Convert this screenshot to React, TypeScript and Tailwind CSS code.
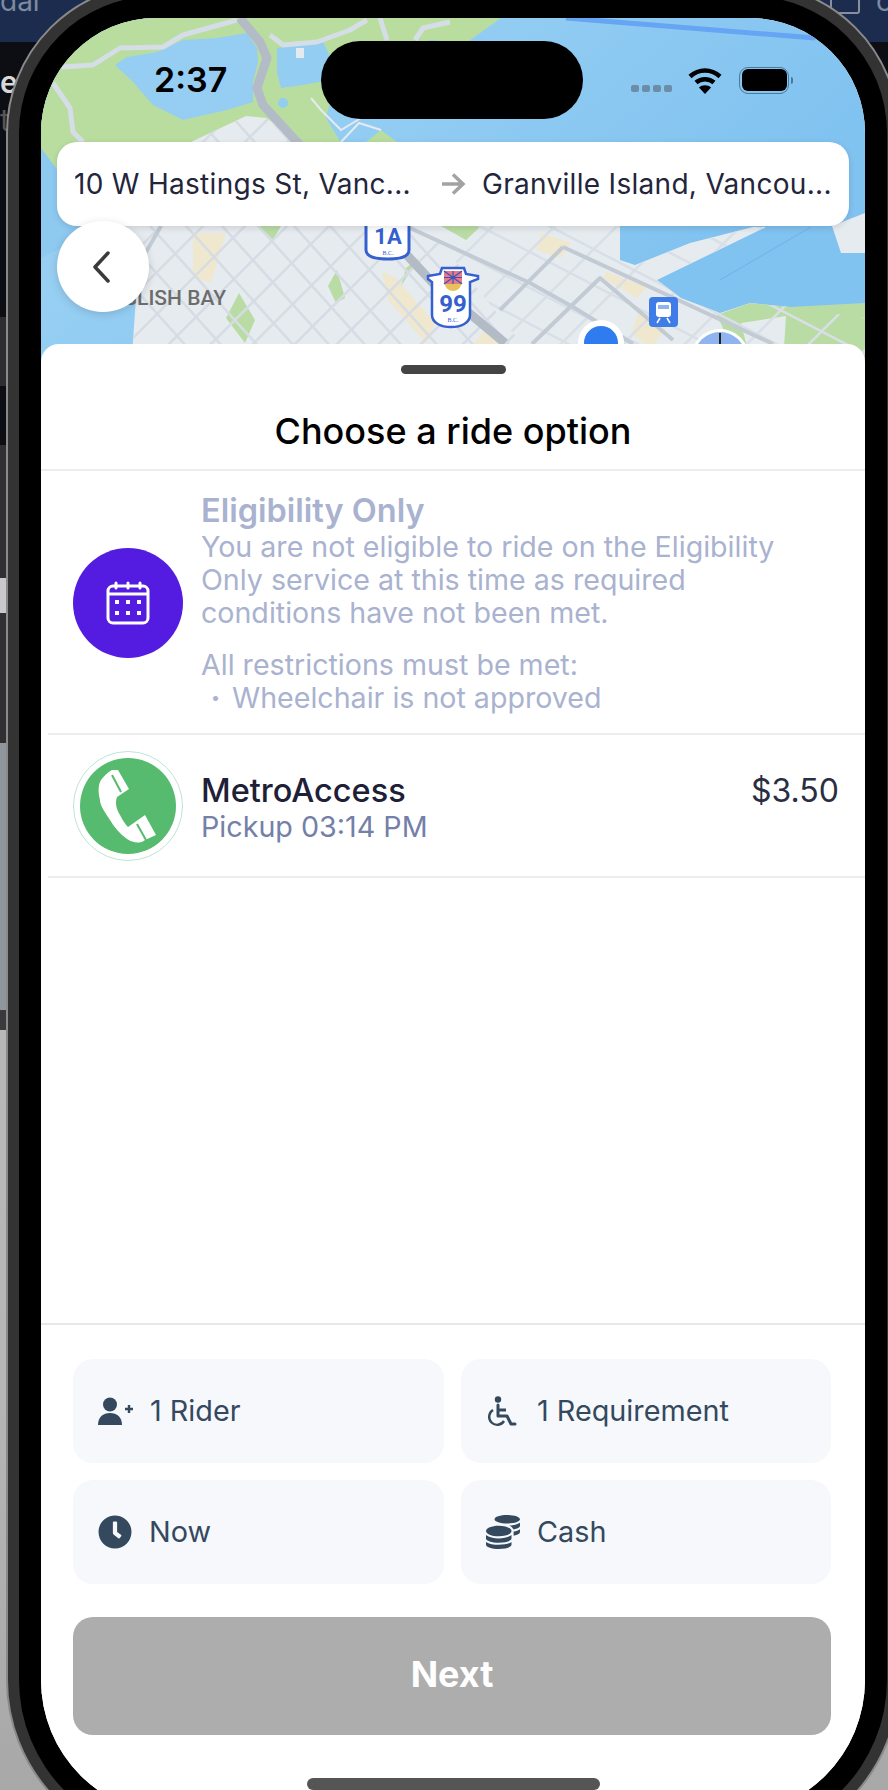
import { FaClock, FaCoins } from "react-icons/fa";

const seq = (from: number, to: number, step: number) => {
  const out: number[] = [];
  for (let v = from; v <= to; v += step) out.push(v);
  return out;
};

const cityShape =
  "60,124 150,124 205,98 225,100 262,124 560,124 579,209 579,242 594,247 649,225 712,209 725,209 616,262 640,280 679,295 709,285 749,289 824,300 824,350 90,350 95,280 85,230";

const MapDrawing = () => (
  <svg viewBox="0 0 824 350" className="absolute inset-0 h-[350px] w-[824px]">
    <defs>
      <linearGradient id="water" x1="0.4" y1="0" x2="1" y2="0.3">
        <stop offset="0" stopColor="#97cff3" />
        <stop offset="1" stopColor="#80c2f0" />
      </linearGradient>
      <clipPath id="city">
        <polygon points={cityShape} />
      </clipPath>
      <clipPath id="west">
        <polygon points="60,100 300,100 500,350 60,350" />
      </clipPath>
      <clipPath id="east">
        <polygon points="300,100 824,100 824,350 500,350" />
      </clipPath>
    </defs>

    <rect width="824" height="350" fill="url(#water)" />

    {/* park */}
    <polygon points="0,0 460,0 425,25 390,22 360,32 300,40 285,100 300,125 0,215" fill="#b8dd9f" />
    <polygon points="0,130 60,210 0,240" fill="#8ec9f0" />
    <polygon points="236,30 282,24 300,60 262,67 240,70 236,55" fill="#93cdf2" />
    <polygon points="74,47 86,39 116,34 142,22 176,20 206,15 216,30 217,44 212,64 212,84 186,92 142,102 112,87 92,64" fill="#96cef3" />
    <circle cx="242" cy="85" r="5" fill="#93cdf2" />
    <polygon points="325,124 340,112 356,124" fill="#b8dd9f" />
    <line x1="525" y1="0" x2="774" y2="20" stroke="#65a5f3" strokeWidth="5" />
    <line x1="679" y1="262" x2="770" y2="209" stroke="#74b0e4" strokeWidth="1" />

    {/* park roads */}
    <g fill="none" stroke="#d5dde6" strokeWidth="5" strokeLinejoin="round">
      <polyline points="21,49 52,47 79,30 122,29 142,17 196,2" />
      <polyline points="12,65 29,90 32,114 42,124" />
      <polyline points="229,17 242,27 276,24 309,12 326,2" />
      <polyline points="339,0 346,22" />
      <polyline points="374,22 382,10 409,4" />
    </g>
    <g fill="none" stroke="#e4ebf0" strokeWidth="2">
      <polyline points="270,80 280,92 300,112 320,100" />
      <polyline points="285,72 298,84 316,76" />
      <polyline points="300,124 318,105 340,112" />
    </g>
    <rect x="255" y="30" width="8" height="10" fill="#e4ebf0" />

    {/* city */}
    <polygon points={cityShape} fill="#e6ebef" />
    <polygon points="791,208 824,195 824,235 800,235" fill="#e6ebef" />
    <polygon points="676,297 709,285 749,289 824,285 824,350 700,350" fill="#b9dca4" />
    <polygon points="700,305 745,298 742,345 710,345" fill="#e6ebef" />
    <g clipPath="url(#city)">
      <g fill="#efe8cf">
        <polygon points="566,254 606,269 596,280 562,260" />
        <polygon points="341,254 354,259 394,305 386,326 347,282" />
        <polygon points="449,305 470,330 430,330" />
        <polygon points="152,215 185,215 170,265 152,260" />
        <polygon points="500,215 530,225 520,240 495,232" />
        <polygon points="600,290 625,310 610,330 590,315" />
      </g>
      <g fill="#b9dca4">
        <polygon points="287,268 296,252 304,280 295,285" />
        <polygon points="185,300 198,275 214,302 204,325" />
        <polygon points="218,208 240,208 232,222" />
        <polygon points="400,208 440,208 425,222" />
        <polygon points="365,250 378,240 360,268" />
      </g>
      <g clipPath="url(#west)" stroke="#d6dce4" strokeWidth="2.500">
        {seq(-60, 420, 36).map((x) => (
          <line key={`wa${x}`} x1={x} y1={100} x2={x + 225} y2={350} />
        ))}
        {seq(60, 760, 42).map((x) => (
          <line key={`wb${x}`} x1={x} y1={100} x2={x - 250} y2={350} />
        ))}
      </g>
      <g clipPath="url(#east)" stroke="#d8dfe6" strokeWidth="2.500">
        {seq(-80, 260, 36).map((y) => (
          <line key={`ea${y}`} x1={300} y1={y} x2={824} y2={y + 272} />
        ))}
        {seq(560, 1100, 62).map((x) => (
          <line key={`eb${x}`} x1={x} y1={100} x2={x - 250} y2={350} />
        ))}
      </g>
      <g fill="none" stroke="#c2cad4" strokeWidth="4" strokeLinejoin="round">
        <polyline points="369,210 489,265 532,289 592,326" />
        <polyline points="522,229 609,269 732,326" />
        <polyline points="459,292 522,229" />
        <polyline points="491,326 559,260 632,322" />
        <polyline points="120,208 90,260" />
      </g>
    </g>

    {/* highway */}
    <polyline points="199,0 219,24 226,40 216,70 222,87 256,124 364,235 392,265 464,325" fill="none" stroke="#b3bcc6" strokeWidth="9" strokeLinejoin="round" />

    <text x="185" y="287" textLength="130" lengthAdjust="spacingAndGlyphs" textAnchor="end" fontFamily="Roboto, sans-serif" fontSize="21" fontWeight="500" fill="#6c6c6c">ENGLISH BAY</text>

    {/* 1A shield */}
    <path d="M325 190h43v42c0 7-10 9-21 9s-22-2-22-9z" fill="#fff" stroke="#3560d0" strokeWidth="3" />
    <text x="347" y="226" textAnchor="middle" fontFamily="Roboto, sans-serif" fontWeight="700" fontSize="22" fill="#3560d0">1A</text>
    <text x="347" y="237" textAnchor="middle" fontFamily="Liberation Serif, serif" fontSize="6" fill="#3560d0">B.C.</text>

    {/* 99 shield */}
    <g transform="translate(5 2)">
      <path d="M382 256l12-2 2-6h22l2 6 12 2v3l-8 3v33c0 8-9 12-19 12s-19-4-19-12v-33l-4-3z" fill="#fff" stroke="#3560d0" strokeWidth="2.500" />
      <rect x="398" y="251" width="18" height="13" fill="#e8788a" />
      <path d="M398 251l18 13M416 251l-18 13M407 251v13M398 257.500h18" stroke="#3a55b0" strokeWidth="1.200" />
      <path d="M399 264h16c0 4-4 7-8 7s-8-3-8-7z" fill="#e7c25a" />
      <text x="407" y="292" textAnchor="middle" fontFamily="Roboto, sans-serif" fontWeight="700" fontSize="24" fill="#3560d0">99</text>
      <text x="407" y="302" textAnchor="middle" fontFamily="Liberation Serif, serif" fontSize="6" fill="#3560d0">B.C.</text>
    </g>

    {/* train */}
    <rect x="608" y="279" width="29" height="30" rx="4" fill="#3f7ce8" />
    <rect x="615" y="284" width="15" height="15" rx="3" fill="#fff" />
    <rect x="617" y="287" width="11" height="4" fill="#8fb4ef" />
    <path d="M616 305l3-5M629 305l-3-5" stroke="#fff" strokeWidth="1.500" />

    {/* start and end pins */}
    <circle cx="560" cy="325" r="23" fill="#fff" />
    <circle cx="560" cy="325" r="17" fill="#2f7bf0" />
    <circle cx="679" cy="340" r="29" fill="#fff" />
    <circle cx="679" cy="340" r="26" fill="#8fb4ef" />
    <line x1="679" y1="315" x2="679" y2="330" stroke="#222" strokeWidth="2" />
  </svg>
);

const CalendarIcon = () => (
  <svg viewBox="0 0 44 44" className="h-[44px] w-[44px]" fill="none">
    <rect x="2" y="5" width="40" height="37" rx="5" stroke="#fff" strokeWidth="3" />
    <path d="M2 13h40" stroke="#fff" strokeWidth="3" />
    <path d="M10 2v5M22 2v5M34 2v5" stroke="#fff" strokeWidth="3" strokeLinecap="round" />
    <g fill="#fff">
      <rect x="9" y="19" width="4" height="4" />
      <rect x="20" y="19" width="4" height="4" />
      <rect x="31" y="19" width="4" height="4" />
      <rect x="9" y="30" width="4" height="4" />
      <rect x="20" y="30" width="4" height="4" />
      <rect x="31" y="30" width="4" height="4" />
    </g>
  </svg>
);

const PhoneIcon = () => (
  <svg viewBox="-55 -55 110 110" className="h-[110px] w-[110px] shrink-0">
    <circle r="54.500" fill="none" stroke="#bfe5d0" strokeWidth="1" />
    <circle r="48" fill="#56ba6f" />
    <path
      d="M-16 -36L-10 -36L1 -17L-11 -9C-13 -4 -12 3 -8 9C-5 15 -2 19 0 21L17 9L28 29L17 34C12 38 5 37 -1 33C-8 28 -14 21 -18 14C-24 5 -28 -1 -28 -6C-30 -14 -30 -21 -27 -26C-24 -30 -20 -34 -16 -36Z"
      fill="#fff"
    />
    <path d="M-16 -31L-7 -14M9 18L18 34" stroke="#56ba6f" strokeWidth="2" />
  </svg>
);

const RiderIcon = () => (
  <svg viewBox="0 0 35 28" className="h-[28px] w-[35px]" fill="#34495e">
    <circle cx="12" cy="7.500" r="7" />
    <path d="M0 28c0-8 5-12 12-12s12 4 12 12z" />
    <path d="M31 8v8M27 12h8" stroke="#34495e" strokeWidth="2.400" />
  </svg>
);

const WheelchairIcon = () => (
  <svg viewBox="0 0 34 31" className="h-[31px] w-[34px]" fill="none" stroke="#34495e" strokeWidth="3">
    <circle cx="12" cy="3.500" r="3.200" fill="#34495e" stroke="none" />
    <path d="M12 9v11h9l4 8h4" strokeLinejoin="round" strokeLinecap="round" />
    <path d="M12 14h8" />
    <path d="M7 14a8 8 0 1 0 11 11" strokeWidth="2.400" />
  </svg>
);

const options = [
  { label: "1 Rider", icon: <RiderIcon /> },
  { label: "1 Requirement", icon: <WheelchairIcon /> },
  { label: "Now", icon: <FaClock size={34} color="#34495e" /> },
  { label: "Cash", icon: <FaCoins size={34} color="#34495e" /> },
];

export default function App() {
  return (
    <div className="relative h-[1790px] w-[888px] overflow-hidden bg-[#b5b5b5] font-['Inter',sans-serif]">
      {/* desktop behind the phone */}
      <div className="flex h-full flex-col">
        <div className="flex h-[42px] justify-between bg-[#1b2c4e] text-[28px] leading-none text-[#7d8aa0]">
          <span className="-mt-[13px]">dar</span>
          <div className="flex">
            <div className="-mt-[8px] mr-[16px] h-[22px] w-[30px] rounded-[3px] border-2 border-[#8a8f9c]" />
            <span className="-mt-[13px] mr-[-4px]">c</span>
          </div>
        </div>
        <div className="flex h-[275px] flex-col bg-[#0c0e14] pt-[25px] text-[30px] leading-none text-[#d8d8d8]">
          <span className="font-semibold">e</span>
          <span className="mt-[8px] text-[#555]">t</span>
        </div>
        <div className="h-[69px] bg-[#2e2e30]" />
        <div className="h-[59px] bg-[#0c0e14]" />
        <div className="h-[133px] bg-[#303032]" />
        <div className="h-[35px] bg-[#c9c9cc]" />
        <div className="h-[130px] bg-[#303032]" />
        <div className="h-[267px] bg-[#8f979c]" />
        <div className="h-[20px] bg-[#3a3a3c]" />
        <div className="flex-1 bg-gradient-to-b from-[#b8b8b8] via-[#b5b5b5] to-[#a8a8a8]" />
      </div>

      {/* phone */}
      <div className="absolute left-[6px] top-[-17px] h-[1867px] w-[894px] rounded-t-[150px] rounded-b-[170px] border-2 border-[#8a8a8a] bg-[#333333] p-[11px]">
        <div className="h-full rounded-t-[137px] rounded-b-[157px] bg-black p-[22px]">
          <div className="flex h-full flex-col overflow-hidden rounded-t-[115px] rounded-b-[135px] bg-white">
            <div className="relative h-[350px] w-[824px] shrink-0">
              <MapDrawing />
              <div className="relative flex flex-col">
                <div className="mt-[23px] flex h-[78px] items-center">
                  <div className="w-[280px] pl-[113px] text-[34px] font-semibold leading-none text-black">2:37</div>
                  <div className="h-[78px] w-[262px] rounded-[39px] bg-black" />
                  <div className="flex items-center pl-[48px]">
                    <div className="mt-[17px] flex gap-[3px]">
                      <span className="h-[7px] w-[8px] rounded-[2px] bg-[#6c8da8]" />
                      <span className="h-[7px] w-[8px] rounded-[2px] bg-[#6c8da8]" />
                      <span className="h-[7px] w-[8px] rounded-[2px] bg-[#6c8da8]" />
                      <span className="h-[7px] w-[8px] rounded-[2px] bg-[#6c8da8]" />
                    </div>
                    <svg viewBox="0 0 34 27" className="ml-[16px] h-[27px] w-[34px]" fill="none" stroke="#000" strokeWidth="4.500">
                      <path d="M2 9.500C11 1.500 23 1.500 32 9.500" />
                      <path d="M8 15.500C13 11 21 11 26 15.500" />
                      <path d="M17 27l-6-6.500c3-3 9-3 12 0z" fill="#000" stroke="none" />
                    </svg>
                    <div className="ml-[17px] h-[27px] w-[50px] rounded-[9px] border-[1.5px] border-[#4a7a9a] p-[1.5px]">
                      <div className="h-full rounded-[6px] bg-black" />
                    </div>
                    <div className="ml-[2px] h-[7px] w-[2px] rounded-r-[2px] bg-[#4a7a9a]" />
                  </div>
                </div>
                <div className="mx-4 mt-[23px] flex h-[84px] items-center rounded-[20px] bg-white pl-[17px] text-[28px] tracking-[0.3px] text-[#22253b] shadow-[0_2px_6px_rgba(0,0,0,0.12)]">
                  <span className="w-[368px] whitespace-nowrap">10 W Hastings St, Vanc...</span>
                  <svg viewBox="0 0 24 22" className="h-[22px] w-[24px]" fill="none" stroke="#a3a3a3" strokeWidth="3.500">
                    <path d="M0 11h21M11 1.500l10 9.500-10 9.500" />
                  </svg>
                  <span className="ml-[16px] whitespace-nowrap">Granville Island, Vancou...</span>
                </div>
                <div className="ml-4 -mt-[5px] flex h-[91px] w-[92px] items-center justify-center rounded-full bg-white shadow-[0_2px_8px_rgba(0,0,0,0.15)]">
                  <svg viewBox="0 0 18 32" className="-ml-[5px] h-[32px] w-[18px]" fill="none" stroke="#3a3a3a" strokeWidth="3.500" strokeLinecap="round" strokeLinejoin="round">
                    <path d="M16 2L3 16l13 14" />
                  </svg>
                </div>
              </div>
            </div>

            {/* sheet */}
            <div className="relative -mt-[24px] flex flex-1 flex-col rounded-t-[18px] bg-white">
              <div className="h-[127px] border-b-2 border-[#ececec] pt-[21px]">
                <div className="mx-auto h-[9px] w-[105px] rounded-full bg-[#444444]" />
                <h1 className="mt-[31px] text-center text-[36px] font-medium leading-[52px] text-black">Choose a ride option</h1>
              </div>

              <div className="flex h-[262px] items-center pl-[32px]">
                <div className="mt-[2px] flex h-[110px] w-[110px] shrink-0 items-center justify-center rounded-full bg-[#531ce0]">
                  <CalendarIcon />
                </div>
                <div className="ml-[18px] text-[28.6px] leading-[33px] text-[#a9b2cf]">
                  <p className="text-[32.5px] font-semibold leading-[39px]">Eligibility Only</p>
                  <p>You are not eligible to ride on the Eligibility</p>
                  <p>Only service at this time as required</p>
                  <p>conditions have not been met.</p>
                  <p className="mt-[19px]">All restrictions must be met:</p>
                  <p className="flex items-center">
                    <span className="ml-[10px] w-[21px] text-[16px]">•</span>
                    <span>Wheelchair is not approved</span>
                  </p>
                </div>
              </div>

              <div className="ml-[7px] flex h-[145px] items-center border-y-2 border-[#ececec] pl-[25px] pr-[26px]">
                <PhoneIcon />
                <div className="ml-[18px] mt-[6px] flex-1">
                  <p className="text-[32.5px] font-medium leading-[36px] text-[#1d2036]">MetroAccess</p>
                  <p className="text-[28.7px] leading-[36px] text-[#7480a8]">Pickup 03:14 PM</p>
                </div>
                <span className="-mt-[30px] text-[32px] leading-none text-[#2a2e42]">$3.50</span>
              </div>

              <div className="flex-1" />

              <div className="border-t-2 border-[#e8e8e8] px-[32px] pb-[25px] pt-[34px]">
                <div className="grid grid-cols-[371px_370px] gap-x-[17px] gap-y-[17px]">
                  {options.map((o) => (
                    <div key={o.label} className="flex h-[104px] items-center gap-[17px] rounded-[20px] bg-[#f6f8fc] pl-[25px] text-[28.8px] text-[#34495e]">
                      {o.icon}
                      <span>{o.label}</span>
                    </div>
                  ))}
                </div>
                <button className="mt-[33px] h-[118px] w-[758px] rounded-[20px] bg-[#adadad] pb-[4px] text-[36px] font-bold text-white">Next</button>
                <div className="mx-auto mt-[43px] h-[12px] w-[293px] rounded-full bg-[#555555]" />
              </div>
            </div>
          </div>
        </div>
      </div>
    </div>
  );
}
